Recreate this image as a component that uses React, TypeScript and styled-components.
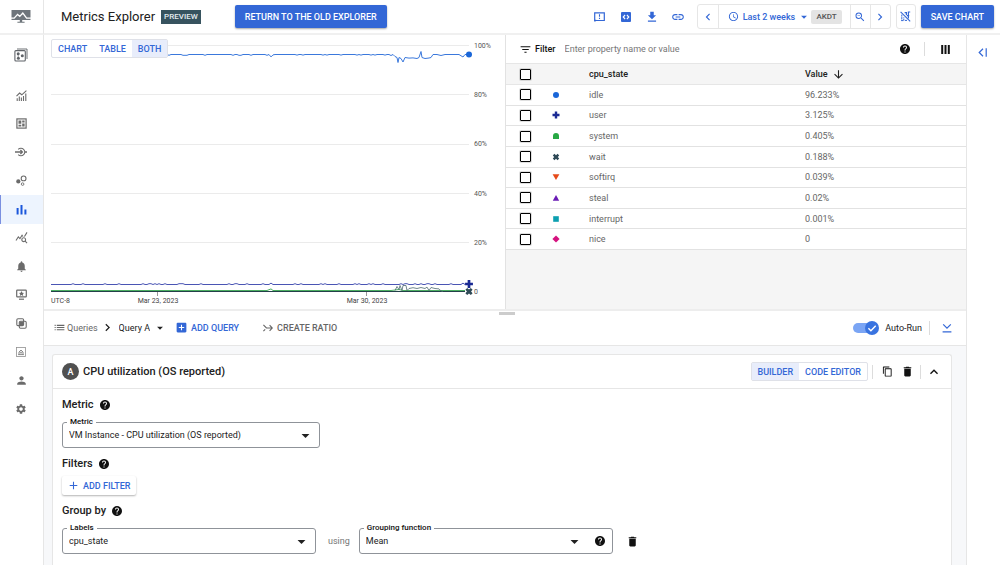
import React, { ReactNode } from "react";
import styled, { createGlobalStyle, css } from "styled-components";
import {
  MdAccessTime,
  MdAdd,
  MdAddBox,
  MdArrowDownward,
  MdArrowDropDown,
  MdChevronLeft,
  MdChevronRight,
  MdContentCopy,
  MdDelete,
  MdExpandLess,
  MdFileDownload,
  MdFilterList,
  MdHelp,
  MdLink,
  MdList,
  MdNotifications,
  MdPerson,
  MdQueryStats,
  MdSettings,
  MdZoomOut,
} from "react-icons/md";

const blue = "#3367d6";
const line = "#e6e6e6";

const GlobalStyle = createGlobalStyle`
  *, *::before, *::after { box-sizing: border-box; }
  body { margin: 0; background: #fff; color: #212121; font: 9px/12px Roboto, "Liberation Sans", sans-serif; }
  button, input, select { font: inherit; color: inherit; margin: 0; }
  svg { display: block; flex: none; }
`;

/* ---------- shell ---------- */

const Shell = styled.div`
  display: grid;
  grid-template: 35px minmax(0, 1fr) / 44px minmax(0, 1fr);
  min-height: 100vh;
`;

const LogoCell = styled.a`
  display: flex;
  align-items: center;
  justify-content: center;
  padding-right: 1px;
  border-right: 1px solid ${line};
  border-bottom: 2px solid #f0f0f0;
  color: #6e757b;
`;

const Header = styled.header`
  display: flex;
  align-items: center;
  padding: 0 6px 0 17px;
  border-bottom: 2px solid #f0f0f0;
`;

const Title = styled.h1`
  margin: 0;
  font-size: 13px;
  line-height: 16px;
  font-weight: 400;
`;

const PreviewTag = styled.span`
  margin: 0 34px 0 6px;
  padding: 1px 3px;
  background: #37535f;
  color: #e4ecef;
  font-size: 8px;
  font-weight: 500;
`;

const PrimaryButton = styled.button`
  height: 23px;
  padding: 0 10px;
  border: 0;
  border-radius: 2px;
  background: ${blue};
  color: #fff;
  font-weight: 500;
  white-space: nowrap;
  box-shadow: 0 1px 2px rgba(0, 0, 0, 0.35);
`;

const IconButton = styled.button<{ $size?: number; $tone?: string }>`
  display: flex;
  align-items: center;
  justify-content: center;
  flex: none;
  width: ${(p) => p.$size ?? 20}px;
  height: ${(p) => p.$size ?? 20}px;
  padding: 0;
  border: 0;
  background: none;
  color: ${(p) => p.$tone ?? "#111"};
`;

const HeaderActions = styled.div`
  display: flex;
  align-items: center;
  gap: 5px;
  margin-left: auto;
`;

const QuickActions = styled.div`
  display: flex;
  gap: 6px;
  padding-right: 4px;
`;

const TimeGroup = styled.div`
  display: flex;
  height: 25px;
  border: 1px solid ${line};
  border-radius: 3px;
  color: ${blue};
`;

const TimeSegment = styled.button<{ $wide?: boolean }>`
  display: flex;
  align-items: center;
  justify-content: ${(p) => (p.$wide ? "flex-start" : "center")};
  width: ${(p) => (p.$wide ? 132 : 20)}px;
  padding: ${(p) => (p.$wide ? "0 8px 0 9px" : "0")};
  border: 0;
  background: none;
  font-weight: 500;
  white-space: nowrap;
  & + & {
    border-left: 1px solid ${line};
  }
`;

const TimeText = styled.span`
  margin: 0 2px 0 4px;
`;

const Zone = styled.span`
  margin-left: auto;
  padding: 1px 5px;
  border-radius: 2px;
  background: #e4e4e4;
  color: #555;
  font-size: 8px;
`;

const BorderedIconButton = styled(IconButton)`
  height: 25px;
  border: 1px solid ${line};
  border-radius: 3px;
`;

/* ---------- sidebar ---------- */

const Sidebar = styled.nav`
  border-right: 1px solid ${line};
`;

const ScopeLink = styled.a`
  display: flex;
  align-items: center;
  justify-content: center;
  height: 40px;
  margin-bottom: 6px;
  padding-right: 1px;
  color: #5f6368;
`;

const NavList = styled.ul`
  display: grid;
  grid-auto-rows: 1fr;
  height: 342px;
  margin: 0;
  padding: 0;
  list-style: none;
`;

const NavLink = styled.a<{ $active?: boolean }>`
  display: flex;
  align-items: center;
  justify-content: center;
  height: 100%;
  padding-right: 1px;
  color: #6b6b6b;
  ${(p) =>
    p.$active &&
    css`
      background: #edf4fe;
      box-shadow: inset 1px 0 #7a8fe0;
      color: #1a56db;
    `}
`;

/* ---------- workspace ---------- */

const Workspace = styled.div`
  display: grid;
  grid-template-columns: minmax(0, 1fr) 34px;
`;

const Rail = styled.aside`
  display: flex;
  justify-content: center;
  align-items: flex-start;
  padding: 7px 3px 0 0;
  border-left: 1px solid ${line};
`;

const Content = styled.main`
  display: flex;
  flex-direction: column;
`;

const TopPanels = styled.div`
  display: grid;
  grid-template-columns: 1fr 1fr;
  border-bottom: 2px solid #ededed;
`;

const ChartPanel = styled.section`
  position: relative;
  display: grid;
  grid-template: 262px 12px / minmax(0, 1fr) 36px;
  padding-left: 7px;
`;

const YAxis = styled.div`
  display: flex;
  flex-direction: column;
  justify-content: space-between;
  height: 258px;
  margin-top: 5px;
  padding-left: 5px;
  color: #555;
  font-size: 7px;
`;

const XAxis = styled.div`
  display: grid;
  grid-template-columns: 65fr 84fr 125fr 84fr 60fr;
  color: #444;
  font-size: 7px;
  line-height: 8px;
  text-align: center;
  white-space: nowrap;
  & > :first-child {
    text-align: left;
  }
  & > :nth-child(3) {
    grid-column: 4;
  }
`;

const Segmented = styled.div<{ $floating?: boolean }>`
  display: flex;
  height: 19px;
  border: 1px solid #dfe1e8;
  border-radius: 2px;
  background: #fff;
  ${(p) =>
    p.$floating &&
    css`
      position: absolute;
      top: 4px;
      left: 7px;
    `}
`;

const Segment = styled.button<{ $on?: boolean }>`
  padding: 0 6px;
  border: 0;
  background: ${(p) => (p.$on ? "#e8edfb" : "none")};
  color: ${blue};
  font-weight: 500;
`;

const TablePanel = styled.section`
  border-left: 1px solid #e2e2e2;
  background: #f5f5f5;
`;

const FilterBar = styled.div`
  display: flex;
  align-items: center;
  height: 28px;
  padding: 0 12px 0 13px;
  background: #fff;
`;

const FilterLabel = styled.label`
  display: flex;
  align-items: center;
  gap: 3px;
  color: #111;
  font-weight: 500;
`;

const FilterInput = styled.input`
  flex: 1;
  min-width: 0;
  margin-left: 9px;
  padding: 0;
  border: 0;
  outline: 0;
  background: none;
  &::placeholder {
    color: #777;
    opacity: 1;
  }
`;

const Divider = styled.span<{ $gap?: number }>`
  flex: none;
  width: 1px;
  height: 14px;
  margin: 0 ${(p) => p.$gap ?? 0}px;
  background: #dcdcdc;
`;

const Table = styled.table`
  width: 100%;
  height: 187px;
  table-layout: fixed;
  border-collapse: collapse;
  background: #fff;
  color: #666;
`;

const HeadRow = styled.tr`
  height: 21px;
  border-top: 1px solid ${line};
  border-bottom: 1px solid ${line};
  background: #f5f5f5;
  color: #212121;
`;

const Row = styled.tr`
  border-bottom: 1px solid #e2e2e2;
`;

const cell = css`
  padding: 0;
  text-align: left;
  vertical-align: middle;
  font-weight: 400;
`;

const Th = styled.th<{ $w?: string }>`
  ${cell}
  width: ${(p) => p.$w ?? "auto"};
  font-weight: 500;
`;

const Td = styled.td`
  ${cell}
`;

const RowHead = styled.th`
  ${cell}
`;

const CheckCell = styled.label`
  display: flex;
  padding-left: 14px;
`;

const CheckBox = styled.input`
  appearance: none;
  width: 11px;
  height: 11px;
  border: 1px solid #000;
  border-radius: 1px;
  background: #fff;
  box-shadow: 0 0 0 1px rgba(0, 0, 0, 0.12);
  &:checked {
    background: ${blue};
  }
`;

const SortLabel = styled.span`
  display: flex;
  align-items: center;
  gap: 4px;
`;

/* ---------- query section ---------- */

const QueryBar = styled.div`
  position: relative;
  display: flex;
  align-items: center;
  height: 35px;
  padding: 0 9px 1px 9px;
  border-bottom: 1px solid ${line};
`;

const Grip = styled.span`
  position: absolute;
  top: 1px;
  left: 50%;
  width: 16px;
  height: 3px;
  margin-left: -6px;
  background: #ccc;
`;

const TextButton = styled.button<{ $tone?: string; $gap?: number; $strong?: boolean }>`
  display: flex;
  align-items: center;
  gap: ${(p) => p.$gap ?? 3}px;
  padding: 0;
  border: 0;
  background: none;
  color: ${(p) => p.$tone ?? "#666"};
  font-weight: ${(p) => (p.$strong ? 500 : 400)};
  white-space: nowrap;
`;

const AddQueryButton = styled(TextButton)`
  margin: 0 24px 0 8px;
`;

const QuerySelectWrap = styled.label`
  display: flex;
  align-items: center;
  gap: 3px;
  margin-left: 4px;
`;

const Crumb = styled.span`
  margin-left: 2px;
`;

const BareSelect = styled.select`
  appearance: none;
  min-width: 0;
  padding: 0;
  border: 0;
  outline: 0;
  background: none;
  field-sizing: content;
`;

const BarEnd = styled.div`
  display: flex;
  align-items: center;
  margin-left: auto;
`;

const SwitchLabel = styled.label`
  position: relative;
  display: flex;
  align-items: center;
  gap: 6px;
`;

const SwitchInput = styled.input`
  position: absolute;
  left: 0;
  width: 26px;
  height: 14px;
  opacity: 0;
`;

const CardArea = styled.div`
  display: flex;
  flex: 1;
  padding: 8px 14px 0 8px;
  background: #f7f8fa;
`;

const Card = styled.section`
  flex: 1;
  min-width: 0;
  border: 1px solid ${line};
  border-bottom: 0;
  border-radius: 3px 3px 0 0;
  background: #fff;
`;

const CardHead = styled.header`
  display: flex;
  align-items: center;
  height: 34px;
  padding: 0 7px 0 9px;
  border-bottom: 1px solid ${line};
`;

const Letter = styled.span`
  display: flex;
  align-items: center;
  justify-content: center;
  width: 17px;
  height: 17px;
  margin-right: 4px;
  border-radius: 50%;
  background: #505050;
  color: #fff;
  font-weight: 500;
`;

const CardTitle = styled.h2`
  margin: 0 auto 0 0;
  font-size: 11px;
  line-height: 16px;
  font-weight: 500;
`;

const CardBody = styled.div`
  padding: 8px 9px 12px;
`;

const SectionTitle = styled.h3`
  display: flex;
  align-items: center;
  gap: 3px;
  margin: 0;
  font-size: 11px;
  line-height: 16px;
  font-weight: 500;
`;

const FormRow = styled.div<{ $top?: number; $bottom?: number }>`
  display: flex;
  align-items: center;
  margin: ${(p) => p.$top ?? 9}px 0 ${(p) => p.$bottom ?? 8}px;
  color: #757575;
`;

const Field = styled.div<{ $width: number }>`
  position: relative;
  display: flex;
  align-items: center;
  width: ${(p) => p.$width}px;
  height: 26px;
  border: 1px solid #8f9399;
  border-radius: 3px;
  color: #212121;
`;

const FieldLabel = styled.label`
  position: absolute;
  top: -7px;
  left: 4px;
  padding: 0 3px;
  background: #fff;
  color: #111;
  font-size: 8px;
  font-weight: 500;
`;

const FieldSelect = styled.select`
  appearance: none;
  flex: 1;
  min-width: 0;
  height: 24px;
  margin-right: -24px;
  padding: 0 24px 0 6px;
  border: 0;
  outline: 0;
  background: none;
`;

const Caret = styled.span<{ $right?: number }>`
  margin-right: ${(p) => p.$right ?? 4}px;
  pointer-events: none;
`;

const Using = styled.span`
  margin: 0 9px 0 12px;
`;

const RowEnd = styled.span`
  margin-left: 8px;
`;

const AddFilter = styled.button`
  display: flex;
  align-items: center;
  gap: 3px;
  height: 19px;
  padding: 0 6px 0 5px;
  border: 0;
  border-radius: 2px;
  background: #fff;
  color: ${blue};
  font-weight: 500;
  box-shadow: 0 1px 2px rgba(0, 0, 0, 0.3);
`;

/* ---------- drawings ---------- */

const Svg = ({ w = 12, h, box = "0 0 24 24", children }: { w?: number; h?: number; box?: string; children: ReactNode }) => (
  <svg width={w} height={h ?? w} viewBox={box} fill="none" stroke="currentColor" strokeWidth="2" aria-hidden="true">
    {children}
  </svg>
);

const Logo = () => (
  <Svg w={20} h={14} box="0 0 20 14">
    <path d="M.5 0h19v10H.5z" fill="currentColor" stroke="none" />
    <path d="M0 8.2h3.2L6.6 4.4l2.2 2L11.8 3l3.8 5.2H20" stroke="#fff" strokeWidth="1.3" />
    <path d="M8.8 10h2.4v1.8h2.4v1H6.4v-1h2.4z" fill="currentColor" stroke="none" />
  </Svg>
);

const ScopeIcon = () => (
  <Svg w={14} box="0 0 14 14">
    <path d="M3 1h10v10" strokeWidth="0.9" />
    <rect x="0.9" y="2.6" width="10.4" height="10.4" rx="1" strokeWidth="1.1" />
    <g fill="currentColor" stroke="none">
      <circle cx="4.2" cy="5.7" r="1.5" />
      <circle cx="8.3" cy="7.8" r="1.5" />
      <circle cx="4.4" cy="10.2" r="1.5" />
    </g>
    <path d="M4.2 5.7v4.5" strokeWidth="0.6" />
  </Svg>
);

const OverviewIcon = () => (
  <Svg w={11} box="0 0 11 11">
    <path d="M.5 6.2 3.6 3l2.2 1.8L10.4.6" strokeWidth="1.1" />
    <path d="M1.2 8.2V11M3.3 6.4V11M5.4 7.4V11M7.5 6V11M9.8 3.6V11" strokeWidth="1.1" />
  </Svg>
);

const DashboardIcon = () => (
  <Svg w={11} box="0 0 11 11">
    <rect x="0.9" y="0.9" width="9.2" height="9.2" strokeWidth="1.2" />
    <path d="M2.5 2.6h2.8v3.2H2.5zM6.2 2.6h2.4v1.8H6.2zM2.5 6.8h2.8v1.7H2.5zM6.2 5.4h2.4v3.1H6.2z" fill="currentColor" stroke="none" />
  </Svg>
);

const IntegrationIcon = () => (
  <Svg w={12} box="0 0 12 12">
    <path d="M0 6h7.4M5.4 4l2 2-2 2M10 6h2" strokeWidth="1.3" />
    <path d="M3.2 3.4a3.8 3.8 0 1 1 0 5.2" strokeWidth="1.1" />
  </Svg>
);

const ServicesIcon = () => (
  <Svg w={11} box="0 0 11 11">
    <circle cx="2.3" cy="6.4" r="2.1" fill="currentColor" stroke="none" />
    <circle cx="7.6" cy="3.4" r="2.4" strokeWidth="1.1" />
    <circle cx="6.6" cy="9.1" r="1.3" strokeWidth="0.9" />
  </Svg>
);

const BarsIcon = () => (
  <Svg w={11} box="0 0 11 11">
    <path d="M1.6 4v6.4M5.5 1v9.4M9.4 5.6v4.8" strokeWidth="2" />
  </Svg>
);

const UptimeIcon = () => (
  <Svg w={11} box="0 0 11 11">
    <rect x="0.7" y="1.1" width="9.6" height="6.8" rx="0.6" strokeWidth="1.2" />
    <path d="M3 10.2h5" strokeWidth="1.2" />
    <path d="M5.5 2l.8 1.7 1.8.2-1.3 1.2.4 1.8-1.7-.9-1.7.9.4-1.8-1.3-1.2 1.8-.2z" fill="currentColor" stroke="none" />
  </Svg>
);

const GroupsIcon = () => (
  <Svg w={11} box="0 0 11 11">
    <rect x="0.8" y="0.8" width="6.8" height="6.8" rx="1.2" strokeWidth="1.1" />
    <rect x="3.3" y="3.3" width="6.9" height="6.9" rx="1.2" strokeWidth="1.1" />
    <rect x="3.6" y="3.6" width="3.8" height="3.8" fill="currentColor" stroke="none" />
  </Svg>
);

const PermissionsIcon = () => (
  <Svg w={10} box="0 0 10 10">
    <rect x="0.5" y="0.5" width="9" height="9" strokeWidth="0.8" opacity="0.75" />
    <path d="M2.2 7.6h5.6M3 7.6V5L5 3l2 2v2.6" strokeWidth="0.8" />
    <circle cx="5" cy="5.6" r="0.7" strokeWidth="0.7" />
  </Svg>
);

const FeedbackIcon = () => (
  <Svg w={11} h={10} box="0 0 11 10">
    <path d="M.7.9h9.6v7.6H.7z" strokeWidth="1.2" />
    <path d="M.7 9.4V8l1.6.4z" strokeWidth="0.8" />
    <path d="M5.5 2.3v2.5M5.5 5.8v1.1" strokeWidth="1.1" />
  </Svg>
);

const CodeIcon = () => (
  <Svg w={10} box="0 0 10 10">
    <rect width="10" height="10" rx="1" fill="currentColor" stroke="none" />
    <path d="M4.1 3 2.2 5l1.9 2M5.9 3l1.9 2-1.9 2" stroke="#fff" strokeWidth="1.1" />
  </Svg>
);

const NoCompareIcon = () => (
  <Svg w={11} box="0 0 11 11">
    <path d="M.6.8l9.6 9.6" strokeWidth="1.1" />
    <path d="M4.6 1.6h1.8V4M6.8 4.6h2.4M10.2 1H8.4v6.4" strokeWidth="1.2" />
    <path d="M1.8 3.6v6M1.2 9.6h2.6V6.4M5 9.4h2.4" strokeWidth="1" strokeDasharray="2 .5" />
  </Svg>
);

const ColumnsIcon = () => (
  <Svg w={9} h={9} box="0 0 9 9">
    <path d="M1.2 0v9M4.5 0v9M7.8 0v9" strokeWidth="2" />
  </Svg>
);

const PanelIcon = () => (
  <Svg w={9} h={9} box="0 0 9 9">
    <path d="M5 .8 1.2 4.5 5 8.2M8.2.2v8.6" strokeWidth="1.2" />
  </Svg>
);

const RatioIcon = () => (
  <Svg w={10} h={8} box="0 0 10 8">
    <path d="M.4.8 3.4 4h5.8M.4 7.2 2.2 5.4M6.6 1.2 9.3 4 6.6 6.8" strokeWidth="1.1" />
  </Svg>
);

const CollapseIcon = () => (
  <Svg w={10} h={10} box="0 0 10 10">
    <path d="M1.2 1.4 5 5.2l3.8-3.8M.6 8.8h8.8" strokeWidth="1.2" />
  </Svg>
);

const SwitchDrawing = () => (
  <Svg w={26} h={14} box="0 0 26 14">
    <rect x="0" y="2" width="22" height="10" rx="5" fill="#7ba5f4" stroke="none" />
    <circle cx="19" cy="7" r="7" fill="#3973e0" stroke="none" />
    <path d="m15.4 7.2 2.5 2.5 4.8-5" stroke="#fff" strokeWidth="1.4" />
  </Svg>
);

const markerShapes: Record<string, ReactNode> = {
  idle: <circle cx="4" cy="4" r="3" fill="#1a66d8" />,
  user: <path d="M2.8.5h2.4v2.3h2.3v2.4H5.2v2.3H2.8V5.2H.5V2.8h2.3z" fill="#1a2a94" />,
  system: <path d="M1 7V4a3 3 0 0 1 6 0v3z" fill="#27a844" />,
  wait: <path d="M2.4.8 4 2.2 5.6.8l1.6 1.6L5.8 4l1.4 1.6-1.6 1.6L4 5.8 2.4 7.2.8 5.6 2.2 4 .8 2.4z" fill="#2f4a57" />,
  softirq: <path d="M.6 1.2h6.8L4 7z" fill="#e64a19" />,
  steal: <path d="M.8 6.8h6.4L4 1z" fill="#6a1bb5" />,
  interrupt: <path d="M1.2 1.2h5.6v5.6H1.2z" fill="#0c9fb0" />,
  nice: <path d="M4 .4 7.6 4 4 7.6.4 4z" fill="#d5127f" />,
};

const Marker = ({ name }: { name: string }) => (
  <svg width="8" height="8" viewBox="0 0 8 8" aria-hidden="true">
    {markerShapes[name]}
  </svg>
);

/* ---------- data ---------- */

const rows: [string, string][] = [
  ["idle", "96.233%"],
  ["user", "3.125%"],
  ["system", "0.405%"],
  ["wait", "0.188%"],
  ["softirq", "0.039%"],
  ["steal", "0.02%"],
  ["interrupt", "0.001%"],
  ["nice", "0"],
];

const wobble = (from: number, to: number, base: number, amp: number, seed: number) => {
  const points: string[] = [];
  for (let x = from; x <= to; x += 2) {
    const n = Math.abs(Math.sin((x + seed) * 12.9898) * 43758.5453) % 1;
    points.push(`${x},${(base + (n > 0.8 ? amp : 0)).toFixed(1)}`);
  }
  return points.join(" ");
};

const idleLine = `${wobble(0, 216, 19, 0.8, 1)} 218,19 220,21.4 222,19.4 ${wobble(224, 338, 19, 0.6, 9)} 340,20 342,19 344,21 346,22 347,27 348,22 350,23 352,26.5 354,22 358,22.6 362,22.4 366,23 368,22 370,16 371,22 374,23 378,22.5 380,22 382,19 386,19 390,20 394,19 408,19 412,21.5 414,19 416,19`;
const userLine = `${wobble(0, 216, 249, -0.8, 5)} 218,249 220,247.6 222,249 ${wobble(224, 408, 249, -0.8, 11)} 410,249 412,247.6 414,249`;
const waitLine = "344,255 346,251 348,254 349,250 351,255 352,250 355,250 356,255 358,253 362,252.2 366,253 370,252 374,253 376,251.6 378,255 380,252 384,253 388,253.4 390,255.4 392,256";

const ChartPlot = () => (
  <svg width="100%" height="262" viewBox="0 0 418 262" preserveAspectRatio="none" overflow="visible" role="img" aria-label="CPU utilization by state">
    {[10, 59, 109, 158, 207].map((y) => (
      <path key={y} d={`M0 ${y + 0.5}H418`} stroke="#ebebeb" />
    ))}
    <path d="M106.5 257v4M315.5 257v4" stroke="#999" />
    <g fill="none" strokeWidth="1" strokeLinejoin="round" transform="translate(0 .5)">
      <polyline points={idleLine} stroke="#3a78dc" />
      <polyline points={userLine} stroke="#4a55b4" />
      <polyline points="0,255 216,255 220,253.4 222,255 340,255 348,254 352,255 414,255" stroke="#4caf62" />
      <path d="M0 256H414" stroke="#24404a" />
      <polyline points={waitLine} stroke="#4d6a70" strokeWidth="0.8" />
    </g>
    <circle cx="418" cy="19.5" r="3" fill="#1a66d8" />
    <svg x="413.5" y="244.5" width="9" height="9" viewBox="0 0 8 8">{markerShapes.user}</svg>
    <svg x="413.5" y="252" width="9" height="9" viewBox="0 0 8 8">{markerShapes.wait}</svg>
  </svg>
);

const navItems: { label: string; icon: ReactNode; active?: boolean }[] = [
  { label: "Overview", icon: <OverviewIcon /> },
  { label: "Dashboards", icon: <DashboardIcon /> },
  { label: "Integrations", icon: <IntegrationIcon /> },
  { label: "Services", icon: <ServicesIcon /> },
  { label: "Metrics explorer", icon: <BarsIcon />, active: true },
  { label: "Query stats", icon: <MdQueryStats size={13} /> },
  { label: "Alerting", icon: <MdNotifications size={13} /> },
  { label: "Uptime checks", icon: <UptimeIcon /> },
  { label: "Groups", icon: <GroupsIcon /> },
  { label: "Permissions", icon: <PermissionsIcon /> },
  { label: "Account", icon: <MdPerson size={13} /> },
  { label: "Settings", icon: <MdSettings size={12} /> },
];

const HelpButton = ({ label }: { label: string }) => (
  <IconButton $size={16} aria-label={label}>
    <MdHelp size={12} />
  </IconButton>
);

export default function App() {
  return (
    <>
      <GlobalStyle />
      <Shell>
        <LogoCell href="#" aria-label="Monitoring home">
          <Logo />
        </LogoCell>
        <Header>
          <Title>Metrics Explorer</Title>
          <PreviewTag>PREVIEW</PreviewTag>
          <PrimaryButton>RETURN TO THE OLD EXPLORER</PrimaryButton>
          <HeaderActions>
            <QuickActions>
              <IconButton $tone={blue} aria-label="Send feedback"><FeedbackIcon /></IconButton>
              <IconButton $tone={blue} aria-label="Show code"><CodeIcon /></IconButton>
              <IconButton $tone={blue} aria-label="Download"><MdFileDownload size={14} /></IconButton>
              <IconButton $tone={blue} aria-label="Copy link"><MdLink size={14} /></IconButton>
            </QuickActions>
            <TimeGroup>
              <TimeSegment aria-label="Earlier"><MdChevronLeft size={14} /></TimeSegment>
              <TimeSegment $wide>
                <MdAccessTime size={11} />
                <TimeText>Last 2 weeks</TimeText>
                <MdArrowDropDown size={14} />
                <Zone>AKDT</Zone>
              </TimeSegment>
              <TimeSegment aria-label="Zoom out"><MdZoomOut size={12} /></TimeSegment>
              <TimeSegment aria-label="Later"><MdChevronRight size={14} /></TimeSegment>
            </TimeGroup>
            <BorderedIconButton $tone={blue} aria-label="Stop comparing"><NoCompareIcon /></BorderedIconButton>
            <PrimaryButton>SAVE CHART</PrimaryButton>
          </HeaderActions>
        </Header>

        <Sidebar aria-label="Monitoring">
          <ScopeLink href="#" aria-label="Metrics scope"><ScopeIcon /></ScopeLink>
          <NavList>
            {navItems.map((item) => (
              <li key={item.label}>
                <NavLink href="#" aria-label={item.label} $active={item.active}>{item.icon}</NavLink>
              </li>
            ))}
          </NavList>
        </Sidebar>

        <Workspace>
          <Content>
            <TopPanels>
              <ChartPanel>
                <ChartPlot />
                <YAxis>
                  {["100%", "80%", "60%", "40%", "20%", "0"].map((t) => <span key={t}>{t}</span>)}
                </YAxis>
                <XAxis>
                  <span>UTC-8</span>
                  <span>Mar 23, 2023</span>
                  <span>Mar 30, 2023</span>
                </XAxis>
                <Segmented $floating>
                  <Segment>CHART</Segment>
                  <Segment>TABLE</Segment>
                  <Segment $on>BOTH</Segment>
                </Segmented>
              </ChartPanel>

              <TablePanel>
                <FilterBar>
                  <FilterLabel htmlFor="row-filter">
                    <MdFilterList size={13} />
                    Filter
                  </FilterLabel>
                  <FilterInput id="row-filter" placeholder="Enter property name or value" />
                  <HelpButton label="Filter help" />
                  <Divider $gap={11} />
                  <IconButton $size={18} aria-label="Choose columns"><ColumnsIcon /></IconButton>
                </FilterBar>
                <Table>
                  <thead>
                    <HeadRow>
                      <Th $w="46px"><CheckCell><CheckBox type="checkbox" aria-label="Select all" /></CheckCell></Th>
                      <Th $w="37px" aria-label="Marker" />
                      <Th>cpu_state</Th>
                      <Th $w="35%"><SortLabel>Value <MdArrowDownward size={13} /></SortLabel></Th>
                    </HeadRow>
                  </thead>
                  <tbody>
                    {rows.map(([name, value]) => (
                      <Row key={name}>
                        <Td><CheckCell><CheckBox type="checkbox" aria-label={`Select ${name}`} /></CheckCell></Td>
                        <Td><Marker name={name} /></Td>
                        <RowHead scope="row">{name}</RowHead>
                        <Td>{value}</Td>
                      </Row>
                    ))}
                  </tbody>
                </Table>
              </TablePanel>
            </TopPanels>

            <QueryBar>
              <Grip />
              <TextButton $gap={1}><MdList size={13} />Queries</TextButton>
              <Crumb><MdChevronRight size={15} /></Crumb>
              <QuerySelectWrap>
                <BareSelect aria-label="Query"><option>Query A</option></BareSelect>
                <MdArrowDropDown size={14} />
              </QuerySelectWrap>
              <AddQueryButton $tone={blue} $strong><MdAddBox size={13} />ADD QUERY</AddQueryButton>
              <TextButton $gap={4} $strong><RatioIcon />CREATE RATIO</TextButton>
              <BarEnd>
                <SwitchLabel>
                  <SwitchInput type="checkbox" role="switch" defaultChecked />
                  <SwitchDrawing />
                  Auto-Run
                </SwitchLabel>
                <Divider $gap={7} />
                <IconButton $tone={blue} aria-label="Collapse"><CollapseIcon /></IconButton>
              </BarEnd>
            </QueryBar>

            <CardArea>
              <Card>
                <CardHead>
                  <Letter>A</Letter>
                  <CardTitle>CPU utilization (OS reported)</CardTitle>
                  <Segmented>
                    <Segment $on>BUILDER</Segment>
                    <Segment>CODE EDITOR</Segment>
                  </Segmented>
                  <Divider $gap={4} />
                  <IconButton aria-label="Duplicate"><MdContentCopy size={11} /></IconButton>
                  <IconButton aria-label="Delete query"><MdDelete size={13} /></IconButton>
                  <Divider $gap={3} />
                  <IconButton aria-label="Collapse query"><MdExpandLess size={16} /></IconButton>
                </CardHead>
                <CardBody>
                  <SectionTitle>Metric <HelpButton label="Metric help" /></SectionTitle>
                  <FormRow>
                    <Field $width={258}>
                      <FieldLabel htmlFor="metric">Metric</FieldLabel>
                      <FieldSelect id="metric"><option>VM Instance - CPU utilization (OS reported)</option></FieldSelect>
                      <Caret><MdArrowDropDown size={19} /></Caret>
                    </Field>
                  </FormRow>
                  <SectionTitle>Filters <HelpButton label="Filters help" /></SectionTitle>
                  <FormRow $top={4}>
                    <AddFilter><MdAdd size={13} />ADD FILTER</AddFilter>
                  </FormRow>
                  <SectionTitle>Group by <HelpButton label="Group by help" /></SectionTitle>
                  <FormRow $bottom={0}>
                    <Field $width={254}>
                      <FieldLabel htmlFor="labels">Labels</FieldLabel>
                      <FieldSelect id="labels"><option>cpu_state</option></FieldSelect>
                      <Caret><MdArrowDropDown size={19} /></Caret>
                    </Field>
                    <Using>using</Using>
                    <Field $width={254}>
                      <FieldLabel htmlFor="grouping">Grouping function</FieldLabel>
                      <FieldSelect id="grouping"><option>Mean</option></FieldSelect>
                      <Caret $right={4}><MdArrowDropDown size={19} /></Caret>
                      <IconButton $size={24} aria-label="Grouping help"><MdHelp size={12} /></IconButton>
                    </Field>
                    <RowEnd>
                      <IconButton $size={24} aria-label="Remove grouping"><MdDelete size={13} /></IconButton>
                    </RowEnd>
                  </FormRow>
                </CardBody>
              </Card>
            </CardArea>
          </Content>
          <Rail>
            <IconButton $tone={blue} aria-label="Open side panel"><PanelIcon /></IconButton>
          </Rail>
        </Workspace>
      </Shell>
    </>
  );
}
